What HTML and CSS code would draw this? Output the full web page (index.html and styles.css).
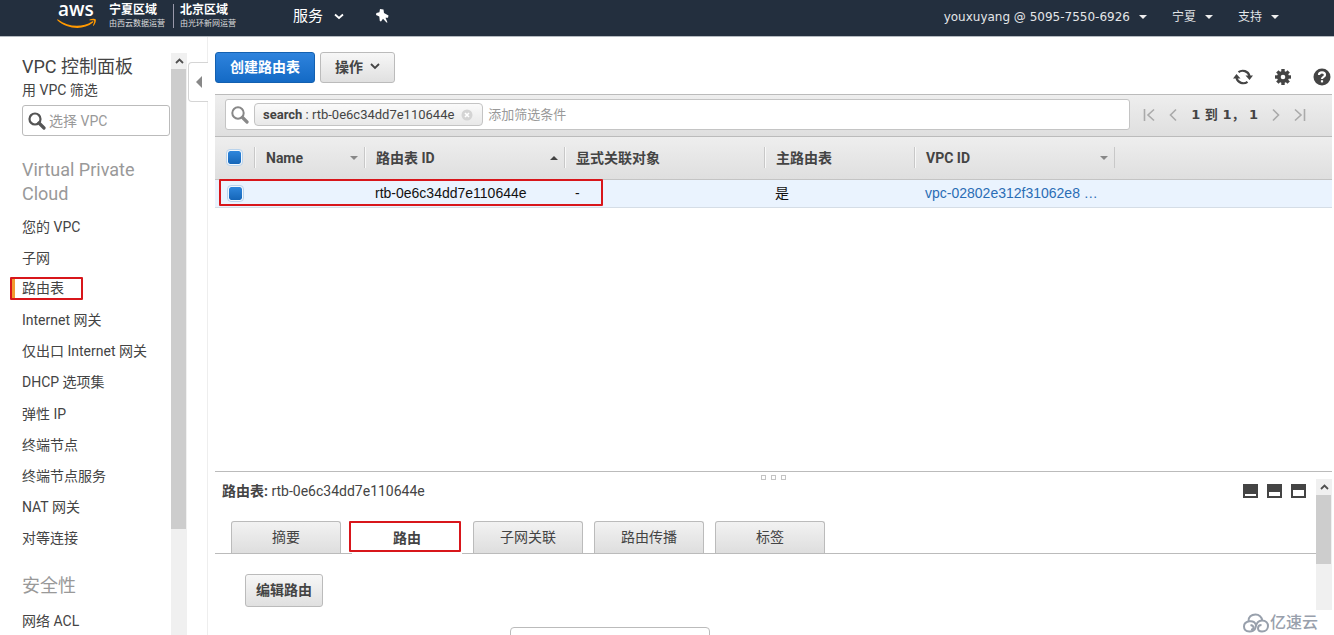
FILE: index.html
```html
<!DOCTYPE html>
<html lang="zh-CN">
<head>
<meta charset="utf-8">
<title>VPC 控制面板</title>
<link rel="stylesheet" href="styles.css">
</head>
<body>
<header class="topbar">
  <a class="logo" href="#" aria-label="AWS">
    <svg width="40" height="28" viewBox="0 0 40 28">
      <text class="logo-text" x="1" y="15">aws</text>
      <path d="M1 18.500C11 26 25 27 35 20.500C36 19.800 37 20.800 36 21.600C26 30 10 28 .5 19.500C0 18.800 .3 18 1 18.500Z" fill="#f90"/>
      <path d="M32.500 18.500C35 17.500 38 17.700 38.800 18.500C39.300 20 38 23.500 36.500 24.800C36 25.100 35.800 24.900 36 24.300C36.700 22.700 37.500 20.500 37.100 19.800C36.500 19.200 34.300 19.300 32.700 19.500Z" fill="#f90"/>
    </svg>
  </a>
  <div class="region-note"><strong>宁夏区域</strong><small>由西云数据运营</small></div>
  <div class="region-note region-note-next"><strong>北京区域</strong><small>由光环新网运营</small></div>
  <nav class="top-left">
    <button class="nav-button services">服务
      <svg width="10" height="7" viewBox="0 0 10 7"><path d="M1 1.500L5 5L9 1.500" fill="none" stroke="currentColor" stroke-width="1.800"/></svg>
    </button>
    <button class="nav-button" aria-label="固定">
      <svg width="13" height="14" viewBox="0 0 13 14"><path d="M4 0L7.500 .5L8 4L12.500 6.500L12 8.700L9.500 8.700L11.500 13.500L10.500 13.500L7 9.700L5 12.500L3.800 12L3.300 7.500L0 6L.4 4L3.400 3.300Z" fill="currentColor"/></svg>
    </button>
  </nav>
  <nav class="top-right">
    <button class="nav-button">youxuyang @ 5095-7550-6926<i class="caret"></i></button>
    <button class="nav-button">宁夏<i class="caret"></i></button>
    <button class="nav-button">支持<i class="caret"></i></button>
  </nav>
</header>

<div class="workspace">
  <aside class="sidebar">
    <div class="sidebar-content">
      <h1 class="title">VPC 控制面板</h1>
      <label class="filter-label" for="vpc-filter">用 VPC 筛选</label>
      <div class="vpc-filter">
        <svg width="18" height="18" viewBox="0 0 18 18"><circle cx="7" cy="7" r="5.500" fill="none" stroke="#555" stroke-width="2.200"/><path d="M11 11L16 16" stroke="#555" stroke-width="3.200" stroke-linecap="round"/></svg>
        <input id="vpc-filter" type="text" placeholder="选择 VPC">
      </div>
      <h2 class="group-title">Virtual Private Cloud</h2>
      <nav class="side-links">
        <a href="#">您的 VPC</a>
        <a href="#">子网</a>
        <a href="#" class="current">路由表</a>
        <a href="#">Internet 网关</a>
        <a href="#">仅出口 Internet 网关</a>
        <a href="#">DHCP 选项集</a>
        <a href="#">弹性 IP</a>
        <a href="#">终端节点</a>
        <a href="#">终端节点服务</a>
        <a href="#">NAT 网关</a>
        <a href="#">对等连接</a>
      </nav>
      <h2 class="group-title security">安全性</h2>
      <nav class="side-links side-links-short">
        <a href="#">网络 ACL</a>
      </nav>
    </div>
    <div class="scrollbar">
      <span class="scroll-arrow"><svg width="9" height="6" viewBox="0 0 9 6"><path d="M1 5L4.500 1.500L8 5" fill="none" stroke="#505050" stroke-width="1.800"/></svg></span>
      <span class="scroll-thumb"></span>
      <span class="scroll-rest"></span>
    </div>
  </aside>
  <div class="gutter"><button class="collapse" aria-label="收起"><i></i></button></div>

  <main class="main">
    <div class="toolbar">
      <button class="btn primary">创建路由表</button>
      <button class="btn">操作
        <svg width="10" height="7" viewBox="0 0 10 7"><path d="M1 1L5 5L9 1" fill="none" stroke="#444" stroke-width="1.800"/></svg>
      </button>
      <div class="tools">
        <button class="icon-button" aria-label="刷新">
          <svg width="20" height="18" viewBox="0 0 20 18"><path d="M5.500 4.200A7 7 0 0 1 16.500 8M14.500 13.800A7 7 0 0 1 3.500 10" fill="none" stroke="#444" stroke-width="2.200"/><path d="M12.500 7.500H20L16.500 12ZM0 10.500H7.500L3.500 6Z" fill="#444"/></svg>
        </button>
        <button class="icon-button" aria-label="设置">
          <svg width="16" height="16" viewBox="0 0 16 16"><g fill="#444"><path d="M6.300 0H9.700V16H6.300Z"/><path d="M0 6.300H16V9.700H0Z"/><path d="M6.300 0H9.700V16H6.300Z" transform="rotate(45 8 8)"/><path d="M6.300 0H9.700V16H6.300Z" transform="rotate(-45 8 8)"/><circle cx="8" cy="8" r="6"/></g><circle cx="8" cy="8" r="2.300" fill="#fff"/></svg>
        </button>
        <button class="icon-button" aria-label="帮助">
          <svg width="18" height="18" viewBox="0 0 18 18"><circle cx="9" cy="9" r="8.500" fill="#444"/><path d="M6 7C6 3.500 12 3.500 12 7C12 9 9 8.800 9 11" fill="none" stroke="#fff" stroke-width="2.200"/><path d="M7.900 12.200H10.100V14.400H7.900Z" fill="#fff"/></svg>
        </button>
      </div>
    </div>

    <div class="searchbar">
      <div class="searchbox">
        <svg width="18" height="18" viewBox="0 0 18 18"><circle cx="7" cy="7" r="5.700" fill="none" stroke="#888" stroke-width="2"/><path d="M11.500 11.500L16 16" stroke="#888" stroke-width="3.200" stroke-linecap="round"/></svg>
        <span class="token"><b>search</b>&nbsp;: rtb-0e6c34dd7e110644e
          <button class="token-remove" aria-label="移除"><svg width="12" height="12" viewBox="0 0 12 12"><circle cx="6" cy="6" r="5.500" fill="#d4d4d4"/><path d="M4 4L8 8M8 4L4 8" stroke="#fff" stroke-width="1.600"/></svg></button>
        </span>
        <input type="text" aria-label="添加筛选条件" placeholder="添加筛选条件">
      </div>
      <div class="pager">
        <button class="icon-button" aria-label="首页"><svg width="12" height="14" viewBox="0 0 12 14"><path d="M1.500 1V13M11 1.500L5 7L11 12.500" fill="none" stroke="#aaa" stroke-width="1.600"/></svg></button>
        <button class="icon-button" aria-label="上一页"><svg width="8" height="14" viewBox="0 0 8 14"><path d="M7 1.500L1.500 7L7 12.500" fill="none" stroke="#aaa" stroke-width="1.600"/></svg></button>
        <span class="pager-text">1 到 1， 1</span>
        <button class="icon-button" aria-label="下一页"><svg width="8" height="14" viewBox="0 0 8 14"><path d="M1 1.500L6.500 7L1 12.500" fill="none" stroke="#aaa" stroke-width="1.600"/></svg></button>
        <button class="icon-button" aria-label="末页"><svg width="12" height="14" viewBox="0 0 12 14"><path d="M10.500 1V13M1 1.500L7 7L1 12.500" fill="none" stroke="#aaa" stroke-width="1.600"/></svg></button>
      </div>
    </div>

    <div class="grid-area">
      <table class="grid">
        <colgroup><col class="c-check"><col class="c-name"><col class="c-wide"><col class="c-wide"><col class="c-main"><col class="c-wide"><col></colgroup>
        <thead>
          <tr>
            <th><input type="checkbox" checked aria-label="全选"></th>
            <th><div class="head">Name<i class="sort"></i></div></th>
            <th><div class="head">路由表 ID<i class="sort up"></i></div></th>
            <th><div class="head">显式关联对象</div></th>
            <th><div class="head">主路由表</div></th>
            <th><div class="head">VPC ID<i class="sort"></i></div></th>
            <th></th>
          </tr>
        </thead>
        <tbody>
          <tr>
            <td><input type="checkbox" checked aria-label="选择 rtb-0e6c34dd7e110644e"></td>
            <td></td>
            <td>rtb-0e6c34dd7e110644e</td>
            <td>-</td>
            <td>是</td>
            <td><a href="#">vpc-02802e312f31062e8 …</a></td>
            <td></td>
          </tr>
        </tbody>
      </table>
      <div class="mark row-mark"></div>
    </div>

    <section class="details">
      <div class="grip"><i></i><i></i><i></i></div>
      <div class="details-body">
        <div class="details-head">
          <span><b>路由表:</b> rtb-0e6c34dd7e110644e</span>
          <div class="pane-sizes">
            <button class="icon-button" aria-label="最小化"><svg width="15" height="14" viewBox="0 0 15 14"><path d="M0 0H15V14H0Z" fill="#444"/><path d="M2 10H13V12H2Z" fill="#fff"/></svg></button>
            <button class="icon-button" aria-label="半屏"><svg width="15" height="14" viewBox="0 0 15 14"><path d="M0 0H15V14H0Z" fill="#444"/><path d="M2 8H13V12H2Z" fill="#fff"/></svg></button>
            <button class="icon-button" aria-label="最大化"><svg width="15" height="14" viewBox="0 0 15 14"><path d="M0 0H15V14H0Z" fill="#444"/><path d="M2 6H13V12H2Z" fill="#fff"/></svg></button>
          </div>
        </div>
        <div class="tabs">
          <button class="tab">摘要</button>
          <button class="tab selected">路由<span class="mark tab-mark"></span></button>
          <button class="tab">子网关联</button>
          <button class="tab">路由传播</button>
          <button class="tab">标签</button>
        </div>
        <div class="tab-panel">
          <button class="btn edit">编辑路由</button>
          <input class="route-filter" type="text" aria-label="路由视图">
        </div>
      </div>
      <div class="scrollbar details-scroll">
        <span class="scroll-arrow"><svg width="9" height="6" viewBox="0 0 9 6"><path d="M1 5L4.500 1.500L8 5" fill="none" stroke="#505050" stroke-width="1.800"/></svg></span>
        <span class="scroll-thumb"></span>
        <span class="scroll-rest"></span>
      </div>
    </section>
  </main>
</div>
<div class="watermark">
  <svg width="26" height="20" viewBox="0 0 26 20"><g fill="none" stroke="#98a0ac" stroke-width="2"><path d="M5.500 8.500C5 4 8.500 1.500 12.500 1.500C16 1.500 19 4 19.200 7.500"/><path d="M13 13C13 9.500 10 7.800 6.500 8.300C3 8.800 1 11 1 13.500C1 20 11.500 20 12.500 14.500C13.300 10 15.500 7.500 19 7.500C27 7.500 27 18.500 19 18.500C13.500 18.500 14 12 18.500 12"/><path d="M7.500 12C12 13 11 17 8 16.500"/></g></svg>
  <span>亿速云</span>
</div>
</body>
</html>
```
FILE: styles.css
```css
* { box-sizing: border-box; }

body {
  margin: 0;
  height: 100vh;
  display: flex;
  flex-direction: column;
  overflow: hidden;
  background: #fff;
  color: #444;
  font: 14px/20px Roboto, "Noto Sans CJK SC", sans-serif;
}

button, input { font: inherit; color: inherit; }
button { cursor: pointer; }
svg { display: block; flex: none; }
a { text-decoration: none; color: inherit; }
h1, h2 { margin: 0; font-weight: 400; }

/* Top bar */
.topbar {
  flex: none;
  display: flex;
  align-items: flex-start;
  height: 37px;
  padding: 0 55px 0 57px;
  background: #232f3e;
  border-bottom: 1px solid #b4bac0;
  color: #fff;
}
.logo { width: 52px; padding-top: 1px; }
.logo svg { overflow: visible; }
.logo-text { font: 600 19px "Open Sans", sans-serif; fill: #fff; }
.region-note {
  display: flex;
  flex-direction: column;
  margin-top: 4px;
  height: 24px;
  white-space: nowrap;
}
.region-note strong { font-size: 12px; line-height: 13px; }
.region-note small { font-size: 8px; line-height: 14px; color: #ddd; width: 64px; }
.region-note-next { border-left: 1px solid #99a; padding-left: 6px; }
.top-left, .top-right { display: flex; align-items: center; height: 32px; }
.top-left { margin-left: 49px; gap: 32px; }
.top-right { margin-left: auto; gap: 25px; height: 34px; }
.nav-button {
  display: flex;
  align-items: center;
  padding: 0;
  border: 0;
  background: none;
  color: #fff;
  font: 12px/20px "DejaVu Sans", "Noto Sans CJK SC", sans-serif;
  white-space: nowrap;
}
.top-right .nav-button { color: #e4e6e8; }
.top-left .services { gap: 11px; font-size: 15px; }
.caret {
  margin-left: 9px;
  border: 4px solid transparent;
  border-top-color: #eee;
  border-bottom: 0;
}

/* Side navigation */
.workspace { flex: 1; display: flex; min-height: 0; }
.sidebar { flex: none; display: flex; width: 187px; padding-top: 16px; overflow: hidden; }
.sidebar-content { flex: 1; min-width: 0; padding: 0 1px 0 22px; }
.title { font-size: 18px; line-height: 27px; }
.filter-label { display: block; line-height: 20px; }
.vpc-filter {
  display: flex;
  align-items: center;
  gap: 3px;
  height: 31px;
  margin-top: 5px;
  padding-left: 5px;
  border: 1px solid #bbb;
  border-radius: 3px;
}
.vpc-filter input, .searchbox input {
  flex: 1;
  min-width: 0;
  padding: 0;
  border: 0;
  outline: 0;
  background: none;
}
input::placeholder { color: #999; opacity: 1; }
.group-title { margin-top: 22px; font-size: 18px; line-height: 24px; color: #999; }
.side-links {
  display: grid;
  grid-auto-rows: 1fr;
  min-height: 343px;
  margin-top: 5px;
  white-space: nowrap;
}
.side-links a { display: flex; align-items: center; }
.side-links-short { min-height: 31px; margin-top: 7px; }
.security { margin-top: 20px; }
.side-links .current {
  align-self: center;
  justify-self: start;
  height: 23px;
  width: 73px;
  margin-left: -12px;
  padding: 0 0 2px 10px;
  border: 2px solid #d8161b;
  border-radius: 1px;
  box-shadow: inset 3px 0 #f29a2e;
}

.scrollbar { flex: none; display: flex; flex-direction: column; width: 16px; background: #f0f0f0; }
.scroll-arrow { display: flex; justify-content: center; align-items: center; height: 16px; }
.scroll-thumb { flex: 460 1 0; background: #cdcdcd; margin-right: 1px; }
.scroll-rest { flex: 106 1 0; }

.gutter { flex: none; width: 21px; padding: 25px 0 0 1px; border-right: 1px solid #eee; }
.collapse {
  display: flex;
  align-items: center;
  justify-content: center;
  width: 20px;
  height: 40px;
  padding: 0;
  border: 1px solid #d5d5d5;
  border-right: 0;
  border-radius: 4px 0 0 4px;
  background: #fff;
}
.collapse i { border: 6px solid transparent; border-right-color: #888; border-left: 0; }

/* Main pane */
.main {
  flex: 1;
  min-width: 0;
  display: flex;
  flex-direction: column;
  padding: 0 2px 0 7px;
}
.toolbar { flex: none; display: flex; gap: 5px; height: 57px; padding-top: 15px; }
.btn {
  display: flex;
  align-items: center;
  justify-content: center;
  gap: 7px;
  height: 31px;
  padding: 0 14px 2px;
  border: 1px solid #bbb;
  border-radius: 3px;
  background: linear-gradient(#f7f7f7, #e0e0e0);
  font-weight: 700;
  white-space: nowrap;
}
.btn.primary {
  border-color: #1360b0;
  background: linear-gradient(#2e83dd, #146ac5);
  color: #fff;
}
.icon-button { padding: 0; border: 0; background: none; }
.tools { display: flex; align-items: center; gap: 22px; margin-left: auto; padding-right: 1px; height: 49px; }
.searchbar {
  flex: none;
  display: flex;
  align-items: center;
  height: 43px;
  padding: 0 26px 2px 10px;
  border-top: 1px solid #bbb;
  border-bottom: 1px solid #bbb;
  background: linear-gradient(#eee, #dfdfdf);
}
.searchbox {
  flex: 1;
  display: flex;
  align-items: center;
  gap: 5px;
  height: 31px;
  padding-left: 5px;
  border: 1px solid #c4c4c4;
  border-radius: 3px;
  background: #fff;
  font-size: 13px;
}
.token {
  display: flex;
  align-items: center;
  height: 23px;
  padding: 0 9px 0 8px;
  border: 1px solid #c4c4c4;
  border-radius: 4px;
  background: linear-gradient(#fafafa, #e8e8e8);
  white-space: nowrap;
}
.token-remove { margin-left: 7px; padding: 0; border: 0; background: none; }
.pager { display: flex; align-items: center; gap: 14px; margin-left: 13px; }
.pager-text { font: 700 13px/20px "DejaVu Sans", "Noto Sans CJK SC", sans-serif; white-space: nowrap; word-spacing: normal; }

.grid-area { position: relative; flex: 1; min-height: 0; }
.grid { width: 100%; table-layout: fixed; border-collapse: collapse; }
.c-check { width: 39px; }
.c-name { width: 110px; }
.c-wide { width: 200px; }
.c-main { width: 150px; }
.grid thead { background: linear-gradient(#eee, #dfdfdf); }
.grid th { height: 42px; padding: 0; border-bottom: 1px solid #c4c4c4; text-align: left; }
.head {
  display: flex;
  align-items: center;
  justify-content: space-between;
  height: 21px;
  padding: 0 6px 0 11px;
}
.grid th + th .head { border-left: 1px solid #c8c8c8; box-shadow: inset 1px 0 #f8f8f8; }
.grid th:last-child { background: linear-gradient(#c8c8c8, #c8c8c8) left center / 1px 21px no-repeat; }
.sort { border: 4px solid transparent; border-top-color: #888; border-bottom: 0; }
.sort.up { border: 4px solid transparent; border-bottom-color: #444; border-top: 0; }
.grid td {
  height: 28px;
  padding: 0 0 0 11px;
  border-bottom: 1px solid #d5dde6;
  background: #eaf3fe;
  color: #111;
  font: 14px/20px "Liberation Sans", "Noto Sans CJK SC", sans-serif;
  white-space: nowrap;
}
.grid td a { color: #2a6db5; }
.grid input {
  appearance: none;
  display: block;
  width: 17px;
  height: 17px;
  margin: 0 0 0 11px;
  border: 1px solid #b9d3ec;
  border-radius: 4px;
  background: #fff;
  padding: 1px;
}
.grid td input { margin-left: 1px; }
.grid input:checked {
  background: linear-gradient(#2f86dc, #1566b8) content-box #f3f8fd;
  box-shadow: inset 0 0 0 1px #f3f8fd;
}
.mark { position: absolute; border: 2px solid #d8161b; border-radius: 1px; }
.row-mark { left: 4px; top: 42px; width: 384px; height: 27px; }

/* Details pane */
.details {
  position: relative;
  flex: none;
  display: flex;
  height: 164px;
  border-top: 1px solid #bbb;
}
.grip {
  position: absolute;
  top: 3px;
  left: 0;
  right: 0;
  display: flex;
  justify-content: center;
  gap: 5px;
}
.grip i { width: 5px; height: 5px; border: 1px solid #c4c4c4; }
.details-body { flex: 1; display: flex; flex-direction: column; min-width: 0; overflow: hidden; }
.details-head { display: flex; justify-content: space-between; padding: 9px 10px 0 7px; }
.pane-sizes { display: flex; align-items: center; gap: 9px; }
.tabs {
  display: flex;
  gap: 11px;
  margin-top: 20px;
  padding-left: 16px;
  border-bottom: 1px solid #bbb;
}
.tab {
  width: 110px;
  height: 32px;
  padding: 0 0 1px;
  border: 1px solid #bbb;
  border-bottom: 0;
  border-radius: 3px 3px 0 0;
  background: linear-gradient(#f2f2f2, #dedede);
}
.tab.selected {
  position: relative;
  height: 33px;
  margin-bottom: -1px;
  border-color: #fff;
  background: #fff;
  font-weight: 700;
}
.tab-mark { left: -4px; top: -1px; width: 112px; height: 31px; }
.tab-panel { padding: 20px 30px 0; }
.edit { height: 33px; padding: 0 10px 1px; }
.route-filter {
  display: block;
  width: 200px;
  height: 30px;
  margin: 20px 0 0 265px;
  border: 1px solid #bbb;
  border-radius: 4px;
}
.details-scroll { margin: 7px 0 25px; }
.details-scroll .scroll-thumb { flex-grow: 69; }
.details-scroll .scroll-rest { flex-grow: 46; }

.watermark {
  position: absolute;
  right: 16px;
  bottom: 2px;
  display: flex;
  align-items: center;
  gap: 1px;
  color: #98a0ac;
  font-size: 16px;
  font-weight: 500;
}
```
